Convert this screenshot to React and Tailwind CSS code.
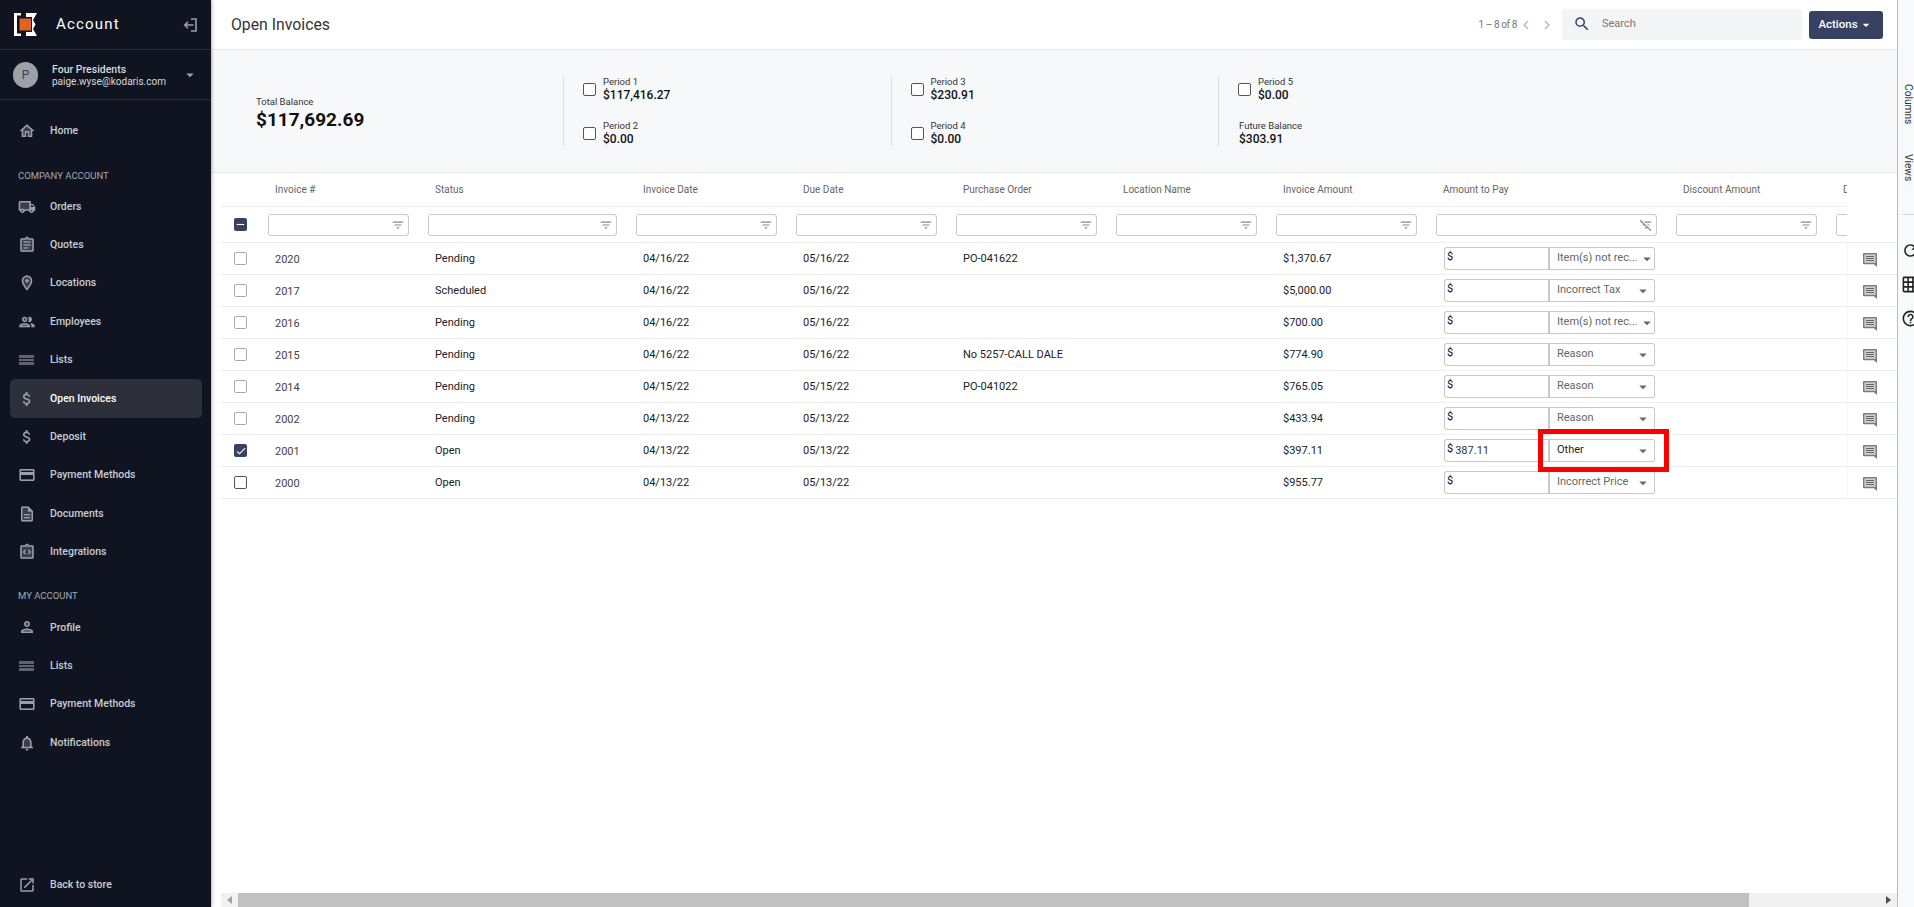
import React from "react";
import {
  MdHome, MdOutlineHome, MdLocalShipping, MdOutlineLocalShipping, MdAssignment, MdOutlineAssignment,
  MdLocationOn, MdOutlineLocationOn, MdPeople, MdOutlinePeople, MdAttachMoney, MdCreditCard, MdOutlineCreditCard,
  MdDescription, MdOutlineDescription, MdIntegrationInstructions, MdOutlineIntegrationInstructions,
  MdPerson, MdOutlinePerson, MdNotifications, MdOutlineNotifications, MdOutlineOpenInNew, MdSearch,
  MdChevronLeft, MdChevronRight, MdRefresh, MdOutlineHelpOutline, MdGridOn, MdFilterList, MdFilterListOff,
  MdArrowDropDown, MdRemove, MdCheck,
} from "react-icons/md";

const font = "font-['Roboto',sans-serif]";

function ListIcon() {
  return (
    <svg viewBox="0 0 15 10" className="ml-[1px] w-[15px] h-[10px]">
      <rect width="15" height="10" fill="#5f636d" />
      <rect width="15" height="1" y="3" fill="#0f1420" />
      <rect width="15" height="1" y="6" fill="#0f1420" />
    </svg>
  );
}

function Two({ fill: Fill, line: Line }) {
  return (
    <span className="relative block w-[18px] h-[18px] text-[#9aa0aa]">
      {Fill && <Fill className="absolute inset-0 w-[18px] h-[18px] opacity-30" />}
      <Line className="absolute inset-0 w-[18px] h-[18px]" />
    </span>
  );
}

function NavItem({ icon, label, active }) {
  return (
    <div className={`h-[38.4px] ml-[10px] mr-[9px] pl-[8px] flex items-center rounded-[5px] ${active ? "bg-[#2d303a] text-white" : "text-[#c9ccd3]"}`}>
      <span className="w-[32px] flex items-center">{icon}</span>
      <span className="text-[10.5px] font-medium">{label}</span>
    </div>
  );
}

function Logo() {
  return (
    <svg viewBox="0 0 23 23" className="w-[23px] h-[23px]">
      <path d="M0 0h7v2.5H3v18h4V23H0z" fill="#fff" />
      <path d="M12 0h11l-4 7 2.5 4.5L19 16l4 7H12z" fill="#fff" />
      <rect x="4" y="4" width="14" height="15" fill="#0f1420" />
      <rect x="5.5" y="5.5" width="11.5" height="12" fill="#e0641f" />
    </svg>
  );
}

function ExitIcon() {
  return (
    <svg viewBox="0 0 14 14" className="w-[14px] h-[14px]" fill="none" stroke="#9aa0aa" strokeWidth="1.6">
      <path d="M8 1h5v12H8" />
      <path d="M10.5 7H2M5 3.8 1.8 7 5 10.2" />
    </svg>
  );
}

function Sidebar() {
  const dollar = <MdAttachMoney className="w-[18px] h-[18px] text-[#9aa0aa]" />;
  const card = <Two fill={MdCreditCard} line={MdOutlineCreditCard} />;
  return (
    <aside className="w-[211px] shrink-0 h-full bg-[#0f1420] flex flex-col shadow-[1px_0_3px_rgba(0,0,0,0.3)] z-10">
      <div className="h-[50px] shrink-0 border-b border-[#2a2e38] flex items-center pl-[14px] pr-[14px]">
        <Logo />
        <span className="ml-[19px] text-[15px] tracking-[1.2px] text-white">Account</span>
        <span className="ml-auto"><ExitIcon /></span>
      </div>
      <div className="h-[50px] shrink-0 border-b border-[#2a2e38] flex items-center pl-[13px] pr-[12px]">
        <div className="w-[25px] h-[26px] mt-[1px] rounded-full bg-[#9ca0a8] text-[#3a3f4a] text-[12px] flex items-center justify-center">P</div>
        <div className="ml-[14px] pt-[3px] text-[#d5d8de] leading-[12px]">
          <div className="text-[10.5px] font-medium">Four Presidents</div>
          <div className="text-[10px]">paige.wyse@kodaris.com</div>
        </div>
        <MdArrowDropDown className="ml-auto w-[18px] h-[18px] text-[#9aa0aa]" />
      </div>
      <div className="pt-[12px]">
        <NavItem icon={<Two fill={MdHome} line={MdOutlineHome} />} label="Home" />
      </div>
      <div className="text-[9.5px] text-[#a4a8b0] pl-[18px] mt-[17px] h-[18px] leading-[18px]">COMPANY ACCOUNT</div>
      <div className="mt-[2px]">
        <NavItem icon={<Two fill={MdLocalShipping} line={MdOutlineLocalShipping} />} label="Orders" />
        <NavItem icon={<Two fill={MdAssignment} line={MdOutlineAssignment} />} label="Quotes" />
        <NavItem icon={<Two fill={MdLocationOn} line={MdOutlineLocationOn} />} label="Locations" />
        <NavItem icon={<Two fill={MdPeople} line={MdOutlinePeople} />} label="Employees" />
        <NavItem icon={<ListIcon />} label="Lists" />
        <NavItem icon={dollar} label="Open Invoices" active />
        <NavItem icon={dollar} label="Deposit" />
        <NavItem icon={card} label="Payment Methods" />
        <NavItem icon={<Two fill={MdDescription} line={MdOutlineDescription} />} label="Documents" />
        <NavItem icon={<Two fill={MdIntegrationInstructions} line={MdOutlineIntegrationInstructions} />} label="Integrations" />
      </div>
      <div className="text-[9.5px] text-[#a4a8b0] pl-[18px] mt-[16px] h-[18px] leading-[18px]">MY ACCOUNT</div>
      <div className="mt-[3px]">
        <NavItem icon={<Two fill={MdPerson} line={MdOutlinePerson} />} label="Profile" />
        <NavItem icon={<ListIcon />} label="Lists" />
        <NavItem icon={card} label="Payment Methods" />
        <NavItem icon={<Two fill={MdNotifications} line={MdOutlineNotifications} />} label="Notifications" />
      </div>
      <div className="mt-auto pb-[3px]">
        <NavItem icon={<MdOutlineOpenInNew className="w-[18px] h-[18px] text-[#9aa0aa]" />} label="Back to store" />
      </div>
    </aside>
  );
}

function Checkbox({ checked, dash, dark }) {
  if (checked || dash) {
    return (
      <span className="w-[13px] h-[13px] rounded-[2px] bg-[#374263] flex items-center justify-center text-white">
        {dash ? <MdRemove className="w-[13px] h-[13px]" /> : <MdCheck className="w-[12px] h-[12px]" />}
      </span>
    );
  }
  return <span className={`block w-[13px] h-[13px] rounded-[2px] border ${dark ? "border-[#555]" : "border-[#aaa]"} bg-white`} />;
}

function Period({ label, value, check = true }) {
  return (
    <div className={`flex items-center h-[26px] ${check ? "" : "pl-[1px]"}`}>
      {check && <span className="mr-[7px]"><Checkbox dark /></span>}
      <div>
        <div className="text-[9.5px] text-[#333] leading-[12px]">{label}</div>
        <div className="text-[12px] text-[#111] font-medium leading-[14px]">{value}</div>
      </div>
    </div>
  );
}

function PeriodCol({ children }) {
  return (
    <div className="w-[327.5px] h-[70px] border-l border-[#dcdcdc] pl-[19px]">
      <div className="flex flex-col gap-[18px]">{children}</div>
    </div>
  );
}

const gridCols = "grid grid-cols-[37px_160px_208px_160px_160px_160px_160px_160px_240px_160px_160px]";
const headers = ["Invoice #", "Status", "Invoice Date", "Due Date", "Purchase Order", "Location Name", "Invoice Amount", "Amount to Pay", "Discount Amount", "Discount"];

const rows = [
  ["2020", "Pending", "04/16/22", "05/16/22", "PO-041622", "$1,370.67", "", "Item(s) not rec..."],
  ["2017", "Scheduled", "04/16/22", "05/16/22", "", "$5,000.00", "", "Incorrect Tax"],
  ["2016", "Pending", "04/16/22", "05/16/22", "", "$700.00", "", "Item(s) not rec..."],
  ["2015", "Pending", "04/16/22", "05/16/22", "No 5257-CALL DALE", "$774.90", "", "Reason"],
  ["2014", "Pending", "04/15/22", "05/15/22", "PO-041022", "$765.05", "", "Reason"],
  ["2002", "Pending", "04/13/22", "05/13/22", "", "$433.94", "", "Reason"],
  ["2001", "Open", "04/13/22", "05/13/22", "", "$397.11", "387.11", "Other"],
  ["2000", "Open", "04/13/22", "05/13/22", "", "$955.77", "", "Incorrect Price"],
];

function FilterBox({ off }) {
  const Icon = off ? MdFilterListOff : MdFilterList;
  return (
    <div className="ml-[10px] mr-[9px] h-[22px] border border-[#c8c8c8] rounded-[3px] bg-white flex items-center justify-end pr-[3px]">
      <Icon className="w-[14px] h-[14px] text-[#888]" />
    </div>
  );
}

function CommentIcon() {
  return (
    <svg viewBox="0 0 14 14" className="w-[14px] h-[14px]">
      <path d="M1.2 0h11.6C13.5 0 14 .5 14 1.2V14l-3-2.8H1.2C.5 11.2 0 10.7 0 10V1.2C0 .5.5 0 1.2 0z" fill="#7a7a7a" />
      <rect x="1.4" y="1.4" width="11.2" height="8.4" fill="#cfcfcf" />
      <path d="M3 3h8v1H3zM3 5h8v1H3zM3 7h8v1H3z" fill="#666" />
    </svg>
  );
}

function Row({ r }) {
  const sel = r[0] === "2001";
  return (
    <div className={`${gridCols} h-[32px] border-b border-[#eeeff1] items-center text-[11px] text-[#222]`}>
      <div className="pl-[13px]"><Checkbox checked={sel} dark={r[0] === "2000"} /></div>
      <div className="pl-[17px] pt-[3px] text-[#444]">{r[0]}</div>
      <div className="pl-[17px] pt-[1px]">{r[1]}</div>
      <div className="pl-[17px] pt-[1px]">{r[2]}</div>
      <div className="pl-[17px] pt-[1px]">{r[3]}</div>
      <div className="pl-[17px] pt-[1px]">{r[4]}</div>
      <div />
      <div className="pl-[17px] pt-[1px]">{r[5]}</div>
      <div className="pl-[18px] flex">
        <div className="w-[106px] h-[23px] border border-r-2 border-[#c8c8c8] rounded-l-[3px] flex items-start pl-[2px] text-[11px] text-[#111] leading-[18px]">
          <span>$</span>
          {r[6] && <span className="ml-[2px] mt-[2px] text-[#333]">{r[6]}</span>}
        </div>
        <div className={`w-[105px] h-[23px] border border-l-0 border-[#c8c8c8] rounded-r-[3px] flex items-center pl-[7px] pr-[2px] ${sel ? "text-[#222]" : "text-[#666]"}`}>
          <span className="whitespace-nowrap">{r[7]}</span>
          <MdArrowDropDown className="ml-auto w-[18px] h-[18px] text-[#666] shrink-0" />
        </div>
      </div>
    </div>
  );
}

export default function App() {
  return (
    <div className={`${font} w-[1914px] h-[907px] flex overflow-hidden bg-white`}>
      <Sidebar />
      <main className="w-[1686px] shrink-0 h-full flex flex-col">
        <header className="h-[50px] shrink-0 border-b border-[#e8e9eb] flex items-center pl-[20px] pr-[14px]">
          <h1 className="text-[15.8px] text-[#333]">Open Invoices</h1>
          <div className="ml-auto flex items-center text-[10px] tracking-[-0.4px] text-[#777]">
            1 – 8 of 8
            <MdChevronLeft className="w-[18px] h-[18px] text-[#bbb]" />
            <MdChevronRight className="ml-[3px] w-[18px] h-[18px] text-[#bbb]" />
          </div>
          <div className="ml-[6px] w-[240px] h-[31px] -mt-[1px] bg-[#f3f4f6] rounded-[3px] flex items-center pl-[11px]">
            <MdSearch className="w-[18px] h-[18px] text-[#374263]" />
            <span className="ml-[11px] text-[11px] text-[#777]">Search</span>
          </div>
          <button className="ml-[7px] w-[74px] h-[28px] bg-[#374263] rounded-[3px] text-white text-[11.5px] font-medium flex items-center justify-center">
            Actions
            <MdArrowDropDown className="w-[16px] h-[16px]" />
          </button>
        </header>
        <section className="h-[123px] shrink-0 bg-[#f7f8fa] border-b border-[#e8e9eb] flex items-center">
          <div className="w-[352px] pl-[45px] pt-[4px]">
            <div className="text-[9.5px] text-[#333] leading-[13px]">Total Balance</div>
            <div className="text-[19px] font-bold text-[#111] leading-[23px]">$117,692.69</div>
          </div>
          <PeriodCol>
            <Period label="Period 1" value="$117,416.27" />
            <Period label="Period 2" value="$0.00" />
          </PeriodCol>
          <PeriodCol>
            <Period label="Period 3" value="$230.91" />
            <Period label="Period 4" value="$0.00" />
          </PeriodCol>
          <PeriodCol>
            <Period label="Period 5" value="$0.00" />
            <Period label="Future Balance" value="$303.91" check={false} />
          </PeriodCol>
        </section>
        <div className="relative flex-1 overflow-hidden pl-[10px]">
          <div className={`${gridCols} h-[34px] border-b border-[#eeeff1] items-center text-[10px] text-[#666]`}>
            <div />
            {headers.map((h) => (
              <div key={h} className="pl-[17px] whitespace-nowrap">{h}</div>
            ))}
          </div>
          <div className={`${gridCols} h-[36px] border-b border-[#eeeff1] items-center`}>
            <div className="pl-[13px]"><Checkbox dash /></div>
            {headers.map((h) => (
              <FilterBox key={h} off={h === "Amount to Pay"} />
            ))}
          </div>
          {rows.map((r) => (
            <Row key={r[0]} r={r} />
          ))}
          {/* sticky comment column */}
          <div className="absolute top-0 right-0 w-[50px] bg-white">
            <div className="h-[70px] border-b border-[#eeeff1]" />
            {rows.map((r) => (
              <div key={r[0]} className="h-[32px] border-b border-[#eeeff1] border-l border-l-[#f5f5f6] flex items-center justify-center pt-[3px] pr-[5px]">
                <CommentIcon />
              </div>
            ))}
          </div>
          {/* highlight on the selected reason */}
          <div className="absolute left-[1327px] top-[256px] w-[131px] h-[43px] border-[5px] border-[#ff0000]" />
          <div className="absolute bottom-0 left-[10px] right-0 h-[14px] bg-[#f1f1f1] flex items-center">
            <span className="w-[17px] flex justify-center">
              <span className="border-y-[4px] border-y-transparent border-r-[5px] border-r-[#a3a3a3]" />
            </span>
            <span className="w-[1511px] h-full bg-[#c1c1c1]" />
            <span className="ml-auto w-[17px] flex justify-center">
              <span className="border-y-[4px] border-y-transparent border-l-[5px] border-l-[#505050]" />
            </span>
          </div>
        </div>
      </main>
      <aside className="flex-1 h-full bg-[#f8f9fb] border-l border-[#b4bac8] overflow-hidden text-[#333]">
        <div className="h-[84px]" />
        <div className="[writing-mode:vertical-rl] text-[10.2px] leading-[12px] w-[12px] h-[40px] ml-[4px]">Columns</div>
        <div className="[writing-mode:vertical-rl] text-[10.2px] leading-[12px] w-[12px] h-[30px] mt-[30px] ml-[4px]">Views</div>
        <div className="mt-[30px] ml-[5px] h-[1px] bg-[#d5d5d5]" />
        <div className="mt-[26px] ml-[3px] flex flex-col gap-[15px] w-[18px]">
          <MdRefresh className="w-[19px] h-[19px] shrink-0 text-[#222]" />
          <MdGridOn className="w-[19px] h-[19px] shrink-0 text-[#222]" />
          <MdOutlineHelpOutline className="w-[19px] h-[19px] shrink-0 text-[#222]" />
        </div>
      </aside>
    </div>
  );
}
